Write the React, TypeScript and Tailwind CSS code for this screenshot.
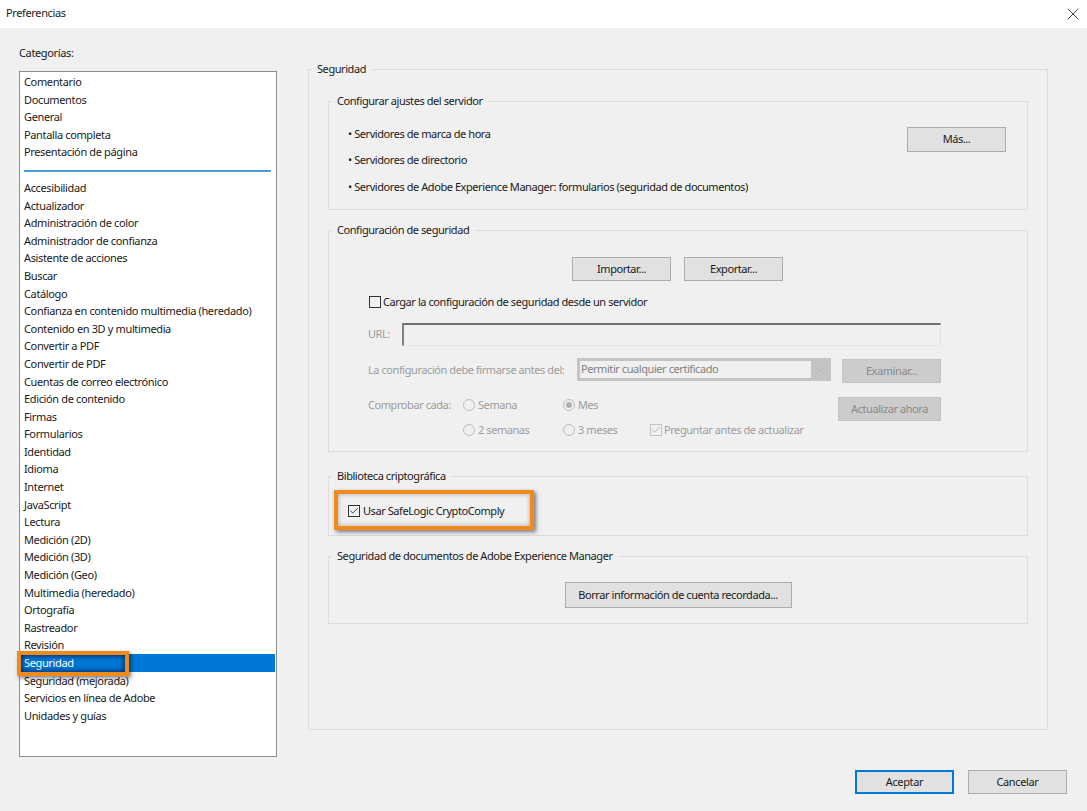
import { X, Check, ChevronDown } from 'lucide-react';

const topCategories = ['Comentario', 'Documentos', 'General', 'Pantalla completa', 'Presentación de página'];

const categories = [
  'Accesibilidad',
  'Actualizador',
  'Administración de color',
  'Administrador de confianza',
  'Asistente de acciones',
  'Buscar',
  'Catálogo',
  'Confianza en contenido multimedia (heredado)',
  'Contenido en 3D y multimedia',
  'Convertir a PDF',
  'Convertir de PDF',
  'Cuentas de correo electrónico',
  'Edición de contenido',
  'Firmas',
  'Formularios',
  'Identidad',
  'Idioma',
  'Internet',
  'JavaScript',
  'Lectura',
  'Medición (2D)',
  'Medición (3D)',
  'Medición (Geo)',
  'Multimedia (heredado)',
  'Ortografía',
  'Rastreador',
  'Revisión',
  'Seguridad',
  'Seguridad (mejorada)',
  'Servicios en línea de Adobe',
  'Unidades y guías',
];

function Row({ label, selected }: { label: string; selected?: boolean }) {
  return (
    <div className={`h-[17.6px] pl-[4px] leading-[17.6px] whitespace-nowrap ${selected ? 'relative bg-[#0078d7] text-white' : ''}`}>
      {label}
      {selected && (
        <div className="absolute left-[-3px] top-[-3px] h-[25px] w-[112px] border-[4px] border-[#f08a1c] shadow-[2px_2px_4px_rgba(0,0,0,0.5),inset_0_0_6px_rgba(0,0,50,0.9)]" />
      )}
    </div>
  );
}

function Button({ label, className, disabled }: { label: string; className: string; disabled?: boolean }) {
  return (
    <div
      className={`flex shrink-0 items-center justify-center border ${
        disabled ? 'border-[#c4c4c4] bg-[#cccccc] text-[#8a8a8a]' : 'border-[#adadad] bg-[#e1e1e1] text-[#1a1a1a]'
      } ${className}`}
    >
      {label}
    </div>
  );
}

function Group({ title, className, children }: { title: string; className: string; children?: React.ReactNode }) {
  return (
    <fieldset className={`min-w-0 border border-[#dcdcdc] ${className}`}>
      <legend className="ml-[3px] px-[5px] leading-[16px] text-[#1a1a1a]">{title}</legend>
      {children}
    </fieldset>
  );
}

function Radio({ label, on, className }: { label: string; on?: boolean; className: string }) {
  return (
    <div className={`flex h-[16px] items-center gap-[3px] ${className}`}>
      <span className="flex h-[12px] w-[12px] shrink-0 items-center justify-center rounded-full border border-[#bcbcbc]">
        {on && <span className="h-[6px] w-[6px] rounded-full bg-[#b0b0b0]" />}
      </span>
      {label}
    </div>
  );
}

export default function App() {
  return (
    <div className="flex h-[811px] w-[1087px] flex-col overflow-hidden bg-[#f0f0f0] font-['Noto_Sans',sans-serif] text-[11px] tracking-[-0.36px] text-[#1a1a1a]">
      {/* title bar */}
      <div className="flex h-[28px] shrink-0 items-center justify-between bg-white pl-[6px] pr-[4px]">
        <span className="pb-[1px]">Preferencias</span>
        <X size={20} strokeWidth={1} className="mb-[1px] text-[#222]" />
      </div>

      <div className="flex min-h-0 flex-1">
        {/* categories */}
        <div className="ml-[19px] w-[258px] shrink-0">
          <div className="h-[43px] pt-[16px] leading-[18px]">Categorías:</div>
          <div className="h-[686px] border border-[#8c8c8c] bg-white pr-[1px] pt-[1px]">
            {topCategories.map((c) => (
              <Row key={c} label={c} />
            ))}
            <div className="mx-[4px] mb-[7px] mt-[9px] h-[2px] bg-[#4a9ad9]" />
            {categories.map((c) => (
              <Row key={c} label={c} selected={c === 'Seguridad'} />
            ))}
          </div>
        </div>

        {/* security panel */}
        <div className="ml-[31px] w-[740px] shrink-0 pt-[33px] tracking-[-0.43px]">
          <Group title="Seguridad" className="h-[669px]">
            <div className="flex flex-col px-[19px] pt-[16px]">
              <Group title="Configurar ajustes del servidor" className="h-[117px]">
                <div className="flex">
                  <div className="flex-1 pl-[19px] pt-[11.5px]">
                    <div className="h-[26.5px] leading-[26.5px]">• Servidores de marca de hora</div>
                    <div className="h-[26.5px] leading-[26.5px]">• Servidores de directorio</div>
                    <div className="h-[26.5px] leading-[26.5px]">• Servidores de Adobe Experience Manager: formularios (seguridad de documentos)</div>
                  </div>
                  <Button label="Más..." className="mr-[21px] mt-[18px] h-[25px] w-[99px]" />
                </div>
              </Group>

              <Group title="Configuración de seguridad" className="mt-[12px] h-[230px]">
                <div className="flex justify-center gap-[13px] pr-[1px] pt-[19px]">
                  <Button label="Importar..." className="h-[24px] w-[99px]" />
                  <Button label="Exportar..." className="h-[24px] w-[99px]" />
                </div>
                <div className="ml-[40px] mt-[14px] flex h-[14px] items-center gap-[2px] leading-[14px]">
                  <span className="h-[12px] w-[12px] shrink-0 border border-[#333]" />
                  Cargar la configuración de seguridad desde un servidor
                </div>
                <div className="ml-[39px] mr-[86px] mt-[14px] flex items-center text-[#9c9c9c]">
                  <span className="w-[34px]">URL:</span>
                  <div className="h-[23px] flex-1 border-b border-l-2 border-r border-t-2 border-b-[#e4e4e4] border-l-[#808080] border-r-[#e4e4e4] border-t-[#707070]" />
                </div>
                <div className="ml-[39px] mr-[86px] mt-[13px] flex items-start text-[#9c9c9c]">
                  <span className="w-[209px] leading-[22px]">La configuración debe firmarse antes del:</span>
                  <div className="-mt-[1px] flex h-[23px] w-[254px] items-center justify-between border-[3px] border-[#c4c4c4] bg-[#f0f0f0] pl-[1px] text-[#808080]">
                    Permitir cualquier certificado
                    <span className="flex h-full w-[17px] items-center justify-center bg-[#c4c4c4]">
                      <ChevronDown size={13} strokeWidth={1} className="text-[#a0a0a0]" />
                    </span>
                  </div>
                  <Button disabled label="Examinar..." className="ml-auto h-[24px] w-[99px]" />
                </div>
                <div className="ml-[39px] mr-[86px] mt-[14px] flex items-start text-[#9c9c9c]">
                  <span className="w-[95px] leading-[16px]">Comprobar cada:</span>
                  <Radio label="Semana" className="w-[100px]" />
                  <Radio on label="Mes" />
                  <Button disabled label="Actualizar ahora" className="ml-auto h-[24px] w-[103px]" />
                </div>
                <div className="ml-[134px] mt-[1px] flex items-center text-[#9c9c9c]">
                  <Radio label="2 semanas" className="w-[100px]" />
                  <Radio label="3 meses" className="w-[87px]" />
                  <span className="mr-[2px] flex h-[12px] w-[12px] items-center justify-center border border-[#c4c4c4]">
                    <Check size={10} strokeWidth={1.5} className="text-[#999]" />
                  </span>
                  Preguntar antes de actualizar
                </div>
              </Group>

              <Group title="Biblioteca criptográfica" className="relative mt-[16px] h-[68px]">
                <div className="ml-[19px] mt-[20px] flex h-[14px] items-center gap-[3px] leading-[14px]">
                  <span className="flex h-[12px] w-[12px] shrink-0 items-center justify-center border border-[#333]">
                    <Check size={12} strokeWidth={2} />
                  </span>
                  Usar SafeLogic CryptoComply
                </div>
                <div className="absolute left-[5px] top-[6px] h-[40px] w-[200px] border-[4px] border-[#f08a1c] shadow-[2px_2px_4px_rgba(0,0,0,0.5),inset_0_0_5px_rgba(0,0,0,0.3)]" />
              </Group>

              <Group title="Seguridad de documentos de Adobe Experience Manager" className="mt-[12px] h-[76px]">
                <div className="flex justify-center pt-[18px]">
                  <Button label="Borrar información de cuenta recordada..." className="h-[26px] w-[227px]" />
                </div>
              </Group>
            </div>
          </Group>
        </div>
      </div>

      {/* footer buttons */}
      <div className="flex h-[41px] shrink-0 gap-[14px] self-end pr-[20px]">
        <Button label="Aceptar" className="h-[24px] w-[99px] border-2 !border-[#0078d7]" />
        <Button label="Cancelar" className="h-[24px] w-[99px]" />
      </div>
    </div>
  );
}
